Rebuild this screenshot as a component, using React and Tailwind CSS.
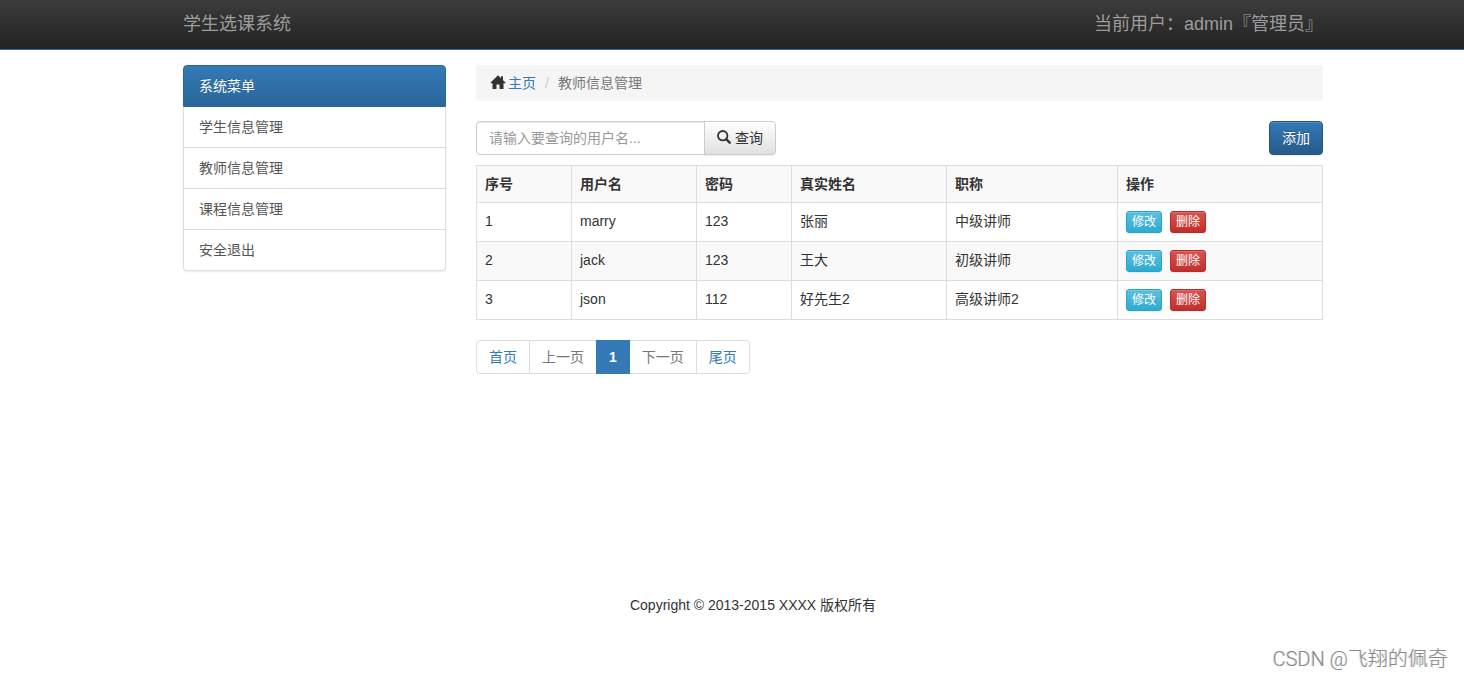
import React, { useState } from "react";

const menuItems = ["学生信息管理", "教师信息管理", "课程信息管理", "安全退出"];

const teachers = [
  { id: 1, username: "marry", password: "123", name: "张丽", title: "中级讲师" },
  { id: 2, username: "jack", password: "123", name: "王大", title: "初级讲师" },
  { id: 3, username: "json", password: "112", name: "好先生2", title: "高级讲师2" },
];

const columns = [
  { label: "序号", width: "w-[95px]" },
  { label: "用户名", width: "w-[125px]" },
  { label: "密码", width: "w-[95px]" },
  { label: "真实姓名", width: "w-[155px]" },
  { label: "职称", width: "w-[171px]" },
  { label: "操作", width: "w-auto" },
];

function HomeIcon() {
  return (
    <svg viewBox="0 0 16 16" className="size-4 shrink-0" fill="#333" aria-hidden="true">
      <path d="M8 .2.6 7.6c-.3.4-.1.7.3.7H2.5V14H6.5V9.5H9.5V14H13.5V8.3h1.6c.4 0 .6-.3.3-.7L13 5.2V1.2H11v2z" />
    </svg>
  );
}

function SearchIcon() {
  return (
    <svg viewBox="0 0 14 14" className="mb-[2px] size-[14px] shrink-0" fill="none" stroke="#333" aria-hidden="true">
      <circle cx="5.7" cy="5.7" r="4.7" strokeWidth="1.8" />
      <path d="M9.2 9.2 12.7 12.7" strokeWidth="2.4" strokeLinecap="round" />
    </svg>
  );
}

function Header() {
  return (
    <header className="h-[50px] border-b border-[#2e6da4] bg-gradient-to-b from-[#3c3c3c] to-[#222] pl-[42px]">
      <div className="mx-auto flex max-w-[1170px] items-center justify-between px-[15px] py-[14px] text-lg leading-5 text-[#9d9d9d]">
        <a href="#">学生选课系统</a>
        <p>当前用户：admin『管理员』</p>
      </div>
    </header>
  );
}

function Sidebar() {
  return (
    <nav className="w-[263px] shrink-0 self-start rounded shadow-[0_1px_2px_rgba(0,0,0,0.08)]">
      <h2 className="rounded-t border border-[#2b669a] bg-gradient-to-b from-[#337ab7] to-[#2b669a] px-[15px] py-[10px] text-white [text-shadow:0_-1px_0_#286090]">
        系统菜单
      </h2>
      <ul className="divide-y divide-[#ddd] rounded-b border-x border-b border-[#ddd]">
        {menuItems.map((item) => (
          <li key={item}>
            <a href="#" className="block px-[15px] py-[10px] text-[#555]">
              {item}
            </a>
          </li>
        ))}
      </ul>
    </nav>
  );
}

function SearchBar() {
  const [keyword, setKeyword] = useState("");

  return (
    <div className="mt-5 flex justify-between">
      <form className="flex" onSubmit={(e) => e.preventDefault()}>
        <input
          type="text"
          aria-label="用户名"
          placeholder="请输入要查询的用户名..."
          value={keyword}
          onChange={(e) => setKeyword(e.target.value)}
          className="h-[34px] w-[229px] rounded-l border border-[#ccc] px-3 shadow-[inset_0_1px_1px_rgba(0,0,0,0.075)] placeholder:text-[#999]"
        />
        <button
          type="submit"
          className="-ml-px flex h-[34px] items-center gap-1 rounded-r border border-[#ccc] bg-gradient-to-b from-white to-[#e0e0e0] px-3 shadow-[0_1px_1px_rgba(0,0,0,0.075)]"
        >
          <SearchIcon />
          查询
        </button>
      </form>
      <button
        type="button"
        className="h-[34px] rounded border border-[#245580] bg-gradient-to-b from-[#337ab7] to-[#265a88] px-3 text-white shadow-[inset_0_1px_0_rgba(255,255,255,0.15),0_1px_1px_rgba(0,0,0,0.075)] [text-shadow:0_-1px_0_rgba(0,0,0,0.2)]"
      >
        添加
      </button>
    </div>
  );
}

function TeacherTable() {
  return (
    <table className="mt-[10px] w-full table-fixed border-collapse text-left">
      <thead>
        <tr className="bg-[#f9f9f9]">
          {columns.map((col) => (
            <th key={col.label} className={`${col.width} border border-[#ddd] p-2 font-bold`}>
              {col.label}
            </th>
          ))}
        </tr>
      </thead>
      <tbody>
        {teachers.map((t) => (
          <tr key={t.id} className="align-top even:bg-[#f9f9f9]">
            <td className="border border-[#ddd] p-2">{t.id}</td>
            <td className="border border-[#ddd] p-2">{t.username}</td>
            <td className="border border-[#ddd] p-2">{t.password}</td>
            <td className="border border-[#ddd] p-2">{t.name}</td>
            <td className="border border-[#ddd] p-2">{t.title}</td>
            <td className="border border-[#ddd] p-2">
              <div className="flex gap-2 text-xs leading-[18px] text-white [text-shadow:0_-1px_0_rgba(0,0,0,0.2)]">
                <button
                  type="button"
                  className="rounded-[3px] border border-[#28a4c9] bg-gradient-to-b from-[#5bc0de] to-[#2aabd2] px-[5px] py-px shadow-[inset_0_1px_0_rgba(255,255,255,0.15),0_1px_1px_rgba(0,0,0,0.075)]"
                >
                  修改
                </button>
                <button
                  type="button"
                  className="rounded-[3px] border border-[#b92c28] bg-gradient-to-b from-[#d9534f] to-[#c12e2a] px-[5px] py-px shadow-[inset_0_1px_0_rgba(255,255,255,0.15),0_1px_1px_rgba(0,0,0,0.075)]"
                >
                  删除
                </button>
              </div>
            </td>
          </tr>
        ))}
      </tbody>
    </table>
  );
}

function Pagination() {
  return (
    <nav aria-label="分页" className="mt-5 flex">
      <a href="#" className="rounded-l border border-[#ddd] px-3 py-[6px] text-[#337ab7]">首页</a>
      <a href="#" className="-ml-px border border-[#ddd] px-3 py-[6px] text-[#777]">上一页</a>
      <a href="#" aria-current="page" className="z-10 -ml-px border border-[#337ab7] bg-[#337ab7] px-3 py-[6px] font-bold text-white">1</a>
      <a href="#" className="-ml-px border border-[#ddd] px-3 py-[6px] text-[#777]">下一页</a>
      <a href="#" className="-ml-px rounded-r border border-[#ddd] px-3 py-[6px] text-[#337ab7]">尾页</a>
    </nav>
  );
}

function App() {
  return (
    <div className="relative min-h-screen bg-white font-['Liberation_Sans','Noto_Sans_CJK_SC',sans-serif] text-sm leading-5 text-[#333]">
      <Header />
      <div className="pl-[42px]">
        <div className="mx-auto mt-[15px] flex max-w-[1170px] gap-[30px] px-[15px]">
          <Sidebar />
          <main className="min-h-[510px] min-w-0 flex-1">
            <nav aria-label="breadcrumb" className="flex items-center rounded bg-[#f5f5f5] px-[14px] py-2">
              <HomeIcon />
              <a href="#" className="ml-[2px] text-[#337ab7]">主页</a>
              <span className="px-[9px] text-[#ccc]">/</span>
              <span className="text-[#777]">教师信息管理</span>
            </nav>
            <SearchBar />
            <TeacherTable />
            <Pagination />
          </main>
        </div>
        <footer className="mt-5 text-center">Copyright © 2013-2015 XXXX 版权所有</footer>
      </div>
      <div className="absolute right-4 bottom-[6px] font-[Roboto,'Noto_Sans_CJK_SC',sans-serif] text-xl leading-6 font-light text-[#888] [text-shadow:-1px_0_0_#ddd]">
        CSDN @飞翔的佩奇
      </div>
    </div>
  );
}

export default App;
